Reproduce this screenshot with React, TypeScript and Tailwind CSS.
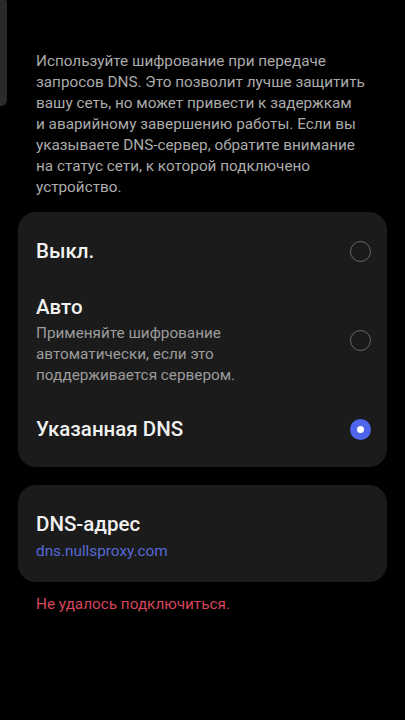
import React from 'react';

type Option = {
    id: string;
    title: string;
    hint?: string;
};

const options: Option[] = [
    { id: 'off', title: 'Выкл.' },
    { id: 'auto', title: 'Авто', hint: 'Применяйте шифрование автоматически, если это поддерживается сервером.' },
    { id: 'custom', title: 'Указанная DNS' },
];

// description lines are broken by hand the way the settings screen shows them
const intro = [
    'Используйте шифрование при передаче',
    'запросов DNS. Это позволит лучше защитить',
    'вашу сеть, но может привести к задержкам',
    'и аварийному завершению работы. Если вы',
    'указываете DNS-сервер, обратите внимание',
    'на статус сети, к которой подключено',
    'устройство.',
];

function Radio({ checked }: { checked: boolean }) {
    if (checked) {
        return (
            <span className="flex h-[21px] w-[21px] shrink-0 items-center justify-center rounded-full bg-[#4f66ec]">
                <span className="h-[7px] w-[7px] rounded-full bg-white"></span>
            </span>
        );
    }
    return <span className="h-[21px] w-[21px] shrink-0 rounded-full border-[1.5px] border-[#686868]"></span>;
}

export default function App() {
    const selected = 'custom';

    return (
        <div className="relative min-h-[720px] w-full bg-black font-['Roboto','Noto_Sans',sans-serif]">
            <div className="absolute left-0 top-0 h-[106px] w-[7px] rounded-br-[6px] rounded-tr-[2px] bg-[#2a2a2a]"></div>

            <div className="pt-[51px]">
                <p className="pl-[36px] pr-[20px] text-[15.3px] leading-[21px] text-[#ababab]">
                    {intro.map((line, i) => (
                        <span key={i} className="block whitespace-nowrap">{line}</span>
                    ))}
                </p>

                <div className="mx-[18px] mt-[14px] flex flex-col gap-[30px] rounded-[18px] bg-[#1b1b1b] pb-[25px] pl-[18px] pr-[16px] pt-[26px]">
                    {options.map((opt) => (
                        <div key={opt.id} className="flex items-center justify-between">
                            <div className="pr-4">
                                <div className="text-[20.5px] font-medium leading-[26px] text-[#f1f1f1]">{opt.title}</div>
                                {opt.hint && (
                                    <div className="mt-[3px] w-[215px] text-[15.3px] leading-[21px] text-[#9c9c9c]">{opt.hint}</div>
                                )}
                            </div>
                            <Radio checked={opt.id === selected} />
                        </div>
                    ))}
                </div>

                <div className="mx-[18px] mt-[18px] rounded-[18px] bg-[#1b1b1b] pb-[20px] pl-[18px] pr-[16px] pt-[26px]">
                    <div className="text-[20.5px] font-medium leading-[26px] text-[#f1f1f1]">DNS-адрес</div>
                    <div className="mt-[4px] text-[15.3px] leading-[21px] text-[#5569d6]">dns.nullsproxy.com</div>
                </div>

                <p className="mt-[12px] pl-[36px] text-[15.3px] leading-[21px] text-[#d8455c]">Не удалось подключиться.</p>
            </div>
        </div>
    );
}
